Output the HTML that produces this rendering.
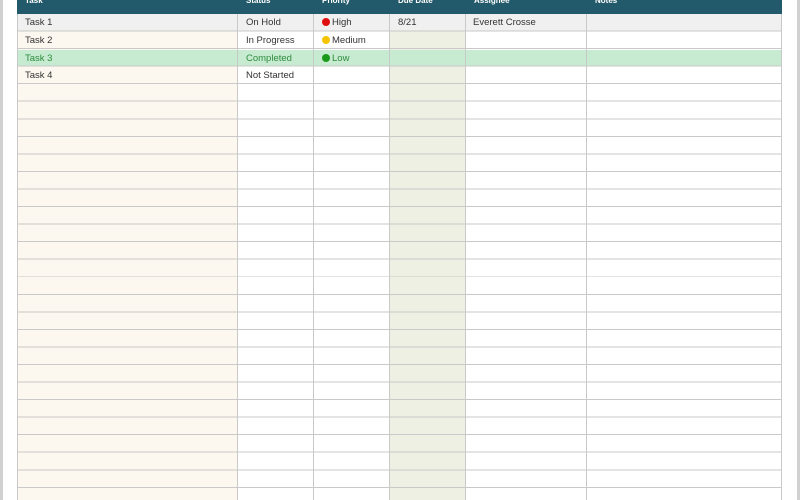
<!DOCTYPE html>
<html><head><style>
html,body{margin:0;padding:0;width:800px;height:500px;overflow:hidden;background:#fff;font-family:"Liberation Sans",sans-serif;}
.l{position:absolute;left:0;top:0;width:3px;height:500px;background:#d0d0d0}
.r{position:absolute;left:797px;top:0;width:3px;height:500px;background:#d0d0d0}
.t{position:absolute;left:17px;top:0;width:765px;height:500px}
.col{position:absolute;top:14px;height:486px}
.hdr{position:absolute;left:0;top:0;width:765px;height:14px;background:#235a6b}
.lines{position:absolute;left:0;top:14px;width:765px;height:486px;background:repeating-linear-gradient(to bottom,transparent 0,transparent 16.55px,#c9c9c9 16.55px,#c9c9c9 17.55px)}
.vl{position:absolute;top:0;width:1px;height:500px;background:#c9c9c9}
.row{position:absolute;left:0;width:765px;height:16.5px}
.tx{position:absolute;font-size:9.5px;color:#333;line-height:17px}
.h{position:absolute;font-size:8px;color:#fff;font-weight:bold;top:-4px}
.dot{display:inline-block;width:8px;height:8px;border-radius:50%;vertical-align:-1px;margin-right:2px}
</style></head><body>
<div class="l"></div><div class="r"></div>
<div class="t">
<div class="col" style="left:0;width:220px;background:#fdf8ef"></div>
<div class="col" style="left:372px;width:76px;background:#eef0e4"></div>
<div class="row" style="top:14px;background:#f0f0f0"></div>
<div class="row" style="top:49.5px;background:#c6ebd0"></div>
<div class="lines"></div>
<div class="vl" style="left:0"></div>
<div class="vl" style="left:220px"></div>
<div class="vl" style="left:296px"></div>
<div class="vl" style="left:372px"></div>
<div class="vl" style="left:448px"></div>
<div class="vl" style="left:569px"></div>
<div class="vl" style="left:764px"></div>
<div class="hdr">
<span class="h" style="left:8px">Task</span><span class="h" style="left:229px">Status</span><span class="h" style="left:305px">Priority</span><span class="h" style="left:381px">Due Date</span><span class="h" style="left:457px">Assignee</span><span class="h" style="left:578px">Notes</span>
</div>
<div class="tx" style="left:8px;top:14px">Task 1</div>
<div class="tx" style="left:229px;top:14px">On Hold</div>
<div class="tx" style="left:305px;top:14px"><span class="dot" style="background:#e01010"></span>High</div>
<div class="tx" style="left:381px;top:14px">8/21</div>
<div class="tx" style="left:456px;top:14px">Everett Crosse</div>
<div class="tx" style="left:8px;top:32px">Task 2</div>
<div class="tx" style="left:229px;top:32px">In Progress</div>
<div class="tx" style="left:305px;top:32px"><span class="dot" style="background:#f5c400"></span>Medium</div>
<div class="tx" style="left:8px;top:49.5px;color:#2e8b3e">Task 3</div>
<div class="tx" style="left:229px;top:49.5px;color:#2e8b3e">Completed</div>
<div class="tx" style="left:305px;top:49.5px;color:#2e8b3e"><span class="dot" style="background:#1a9a1a"></span>Low</div>
<div class="tx" style="left:8px;top:67px">Task 4</div>
<div class="tx" style="left:229px;top:67px">Not Started</div>
</div>
</body></html>
